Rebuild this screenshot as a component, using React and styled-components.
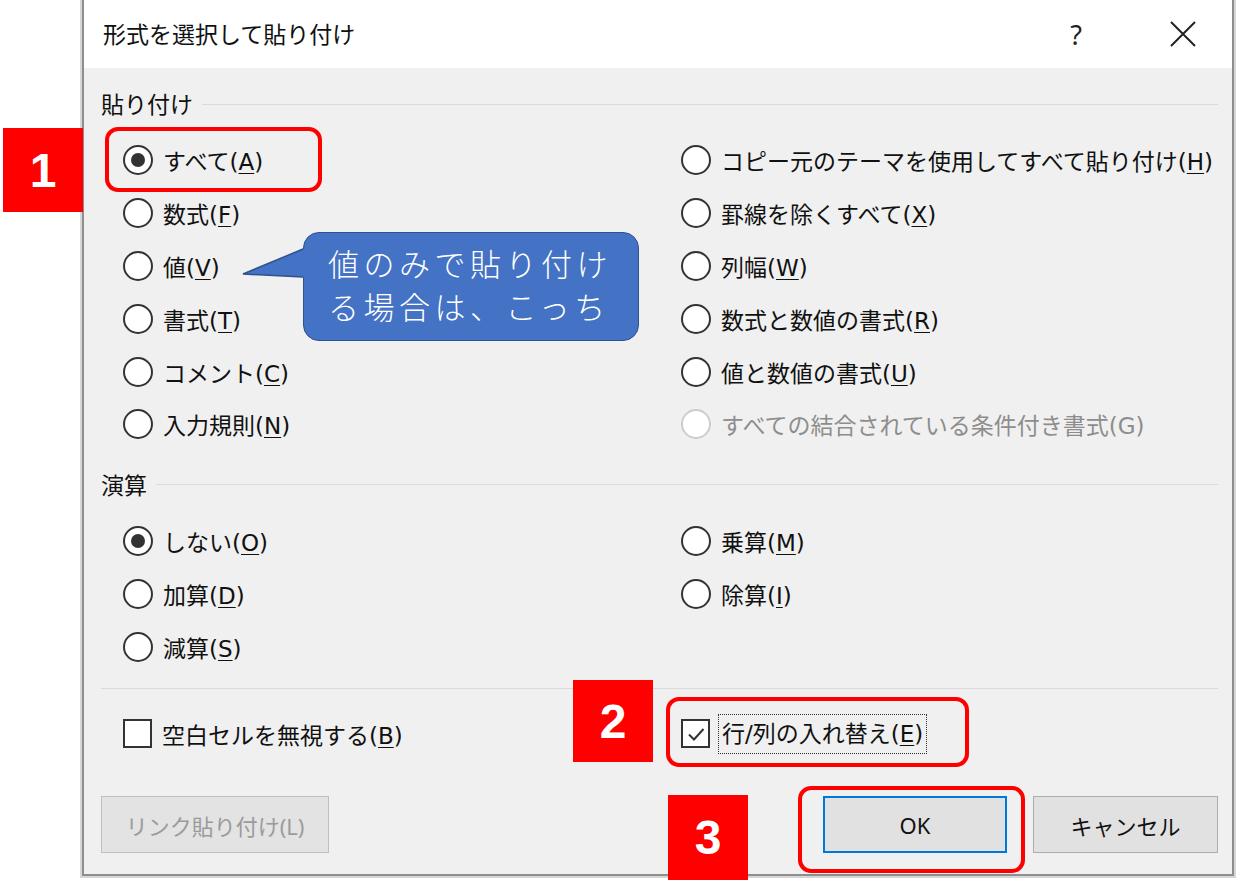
import styled, { createGlobalStyle } from "styled-components";

const Global = createGlobalStyle`
  html, body { margin: 0; padding: 0; background: #fff; }
  body { font-family: "Noto Sans", "Noto Sans CJK JP", sans-serif; }
  * { box-sizing: border-box; }
`;

const Page = styled.div`
  position: relative;
  width: 1240px;
  height: 896px;
  overflow: hidden;
  padding-left: 82px;
  background: #fff;
`;

const Dialog = styled.div`
  width: 1152px;
  height: 876px;
  border: 2px solid #8e8e8e;
  border-top: none;
  box-shadow: 0 0 0 2px #d6d6d6;
  background: #f0f0f0;
  display: flex;
  flex-direction: column;
`;

const TitleBar = styled.div`
  height: 68px;
  background: #fff;
  display: flex;
  align-items: center;
  padding: 0 14px 0 19px;
  color: #111;
`;

const Title = styled.div`
  flex: 1;
  font-size: 23px;
  line-height: 30px;
`;

const TitleButton = styled.div`
  width: 70px;
  height: 50px;
  display: flex;
  align-items: center;
  justify-content: center;
  font-size: 27px;
  color: #222;
  & + & { margin-left: 37px; }
`;

const Body = styled.div`
  flex: 1;
  display: flex;
  flex-direction: column;
  padding: 21px 14px 0 17px;
`;

const SectionHeader = styled.div`
  display: flex;
  align-items: center;
  gap: 9px;
  font-size: 23px;
  line-height: 30px;
  color: #111;
  margin-top: ${(p) => p.$top || 0}px;
  &::after {
    content: "";
    flex: 1;
    height: 1px;
    background: #dadada;
  }
`;

const OptionGrid = styled.div`
  display: grid;
  grid-template-columns: 558px 1fr;
  grid-template-rows: repeat(${(p) => p.$rows}, 52.8px);
  grid-auto-flow: column;
  padding-left: 22px;
  margin-top: 15px;
`;

const Option = styled.div`
  display: flex;
  align-items: center;
  gap: ${(p) => p.$gap || 10}px;
  font-family: "DejaVu Sans", "Noto Sans CJK JP", sans-serif;
  font-size: 23px;
  color: ${(p) => (p.$disabled ? "#8d8d8d" : "#111")};
  white-space: nowrap;
  u { text-underline-offset: 3px; text-decoration-thickness: 1px; }
`;

const Radio = styled.span`
  width: 30px;
  height: 30px;
  flex: none;
  border-radius: 50%;
  background: #fff;
  border: 2px solid ${(p) => (p.$disabled ? "#cdcdcd" : "#333")};
  display: flex;
  align-items: center;
  justify-content: center;
  &::after {
    content: "";
    width: 14px;
    height: 14px;
    border-radius: 50%;
    background: #333;
    display: ${(p) => (p.$checked ? "block" : "none")};
  }
`;

const Divider = styled.div`
  height: 1px;
  background: #dadada;
  margin-top: 15px;
`;

const CheckGrid = styled.div`
  display: grid;
  grid-template-columns: 558px 1fr;
  height: 53px;
  padding-left: 22px;
  margin-top: 18px;
`;

const Box = styled.span`
  width: 29px;
  height: 29px;
  flex: none;
  background: #fff;
  border: 2px solid #333;
  display: flex;
  align-items: center;
  justify-content: center;
`;

const Focus = styled.span`
  border: 1px dotted #333;
  padding: 0 3px;
  line-height: 38px;
`;

const Buttons = styled.div`
  display: flex;
  justify-content: space-between;
  margin-top: 36px;
`;

const Group = styled.div`
  display: flex;
  gap: 26px;
`;

const Button = styled.div`
  width: ${(p) => p.$w}px;
  height: 57px;
  display: flex;
  align-items: center;
  justify-content: center;
  background: ${(p) => (p.$disabled ? "#e3e3e3" : "#e1e1e1")};
  border: ${(p) =>
    p.$primary ? "2px solid #0078d7" : p.$disabled ? "1px solid #bfbfbf" : "1px solid #adadad"};
  color: ${(p) => (p.$disabled ? "#9b9b9b" : "#111")};
  font-size: 22px;
`;

const Badge = styled.div`
  position: absolute;
  left: ${(p) => p.$x}px;
  top: ${(p) => p.$y}px;
  width: 80px;
  height: ${(p) => p.$h}px;
  background: #ff0000;
  color: #fff;
  display: flex;
  align-items: center;
  justify-content: center;
  font-family: "Liberation Sans", Arial, sans-serif;
  font-weight: 700;
  font-size: 48px;
`;

const Frame = styled.div`
  position: absolute;
  left: ${(p) => p.$x}px;
  top: ${(p) => p.$y}px;
  width: ${(p) => p.$w}px;
  height: ${(p) => p.$h}px;
  border: 4px solid #ff0000;
  border-radius: 13px;
`;

const Bubble = styled.div`
  position: absolute;
  left: 303px;
  top: 232px;
  width: 336px;
  height: 109px;
  background: #4472c4;
  border: 1.5px solid #2f528f;
  border-radius: 16px;
  padding: 8px 0 0 24px;
  color: #fff;
  font-family: "Noto Sans CJK JP", sans-serif;
  font-size: 31px;
  font-weight: 300;
  letter-spacing: 4.5px;
  line-height: 43px;
  white-space: nowrap;
`;

const Pointer = styled.svg`
  position: absolute;
  left: -63.5px;
  top: 12.5px;
  overflow: visible;
`;

const Check = () => (
  <svg width="22" height="22" viewBox="0 0 22 22">
    <path d="M4 11.5 L9 16.5 L18.5 6" fill="none" stroke="#333" strokeWidth="2" />
  </svg>
);

const paste = [
  ["すべて", "A", true],
  ["数式", "F"],
  ["値", "V"],
  ["書式", "T"],
  ["コメント", "C"],
  ["入力規則", "N"],
  ["コピー元のテーマを使用してすべて貼り付け", "H"],
  ["罫線を除くすべて", "X"],
  ["列幅", "W"],
  ["数式と数値の書式", "R"],
  ["値と数値の書式", "U"],
];

const ops = [
  ["しない", "O", true],
  ["加算", "D"],
  ["減算", "S"],
  ["乗算", "M"],
  ["除算", "I"],
];

function Row({ label, k, checked }) {
  return (
    <Option>
      <Radio $checked={checked} />
      <span>
        {label}(<u>{k}</u>)
      </span>
    </Option>
  );
}

export default function App() {
  return (
    <Page>
      <Global />
      <Dialog>
        <TitleBar>
          <Title>形式を選択して貼り付け</Title>
          <TitleButton>?</TitleButton>
          <TitleButton>
            <svg width="28" height="28" viewBox="0 0 28 28">
              <path d="M2 2 L26 26 M26 2 L2 26" stroke="#222" strokeWidth="2" />
            </svg>
          </TitleButton>
        </TitleBar>
        <Body>
          <SectionHeader>貼り付け</SectionHeader>
          <OptionGrid $rows={6}>
            {paste.map(([l, k, c]) => (
              <Row key={k} label={l} k={k} checked={c} />
            ))}
            <Option $disabled>
              <Radio $disabled />
              <span>すべての結合されている条件付き書式(G)</span>
            </Option>
          </OptionGrid>

          <SectionHeader $top={19}>演算</SectionHeader>
          <OptionGrid $rows={3}>
            {ops.map(([l, k, c]) => (
              <Row key={k} label={l} k={k} checked={c} />
            ))}
          </OptionGrid>

          <Divider />

          <CheckGrid>
            <Option>
              <Box />
              <span>
                空白セルを無視する(<u>B</u>)
              </span>
            </Option>
            <Option $gap={8}>
              <Box>
                <Check />
              </Box>
              <Focus>
                行/列の入れ替え(<u>E</u>)
              </Focus>
            </Option>
          </CheckGrid>

          <Buttons>
            <Button $w={228} $disabled>
              リンク貼り付け(L)
            </Button>
            <Group>
              <Button $w={184} $primary>
                OK
              </Button>
              <Button $w={185}>キャンセル</Button>
            </Group>
          </Buttons>
        </Body>
      </Dialog>

      <Frame $x={105} $y={127} $w={217} $h={65} />
      <Frame $x={666} $y={697} $w={303} $h={70} />
      <Frame $x={798} $y={786} $w={227} $h={87} />

      <Badge $x={3} $y={128} $h={84}>1</Badge>
      <Badge $x={573} $y={680} $h={82}>2</Badge>
      <Badge $x={668} $y={795} $h={85}>3</Badge>

      <Bubble>
        <Pointer width="66" height="34" viewBox="0 0 66 34">
          <polygon points="62,3 2,28 62,31 66,31 66,3" fill="#4472c4" />
          <polyline points="62,3 2,28 62,31" fill="none" stroke="#2f528f" strokeWidth="1.5" />
        </Pointer>
        <div>値のみで貼り付け</div>
        <div>る場合は、こっち</div>
      </Bubble>
    </Page>
  );
}
